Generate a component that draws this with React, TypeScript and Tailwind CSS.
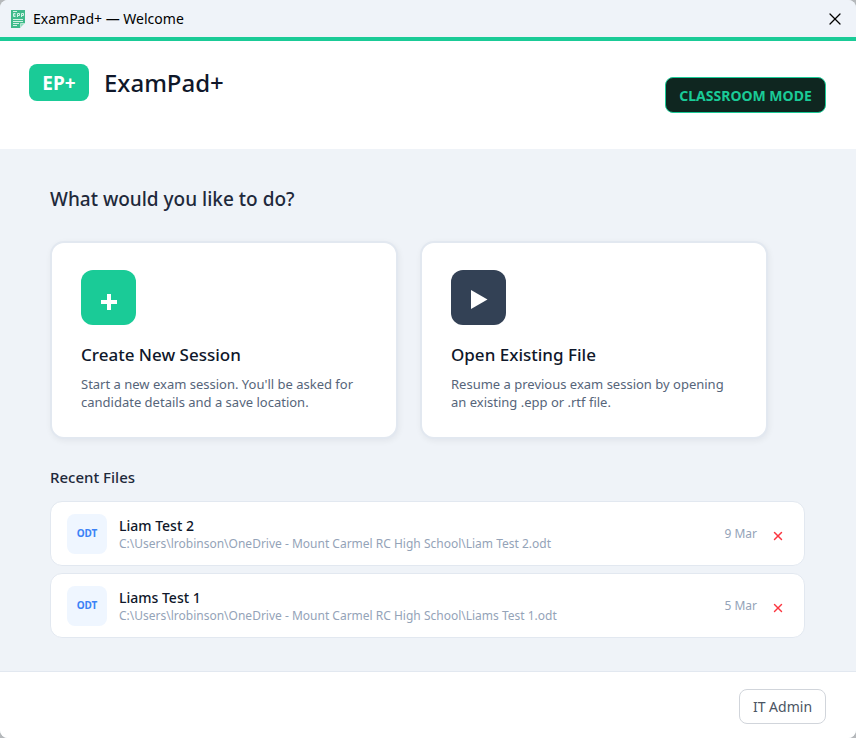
import { X } from "lucide-react";

type RecentFile = {
  name: string;
  path: string;
  date: string;
};

const recentFiles: RecentFile[] = [
  {
    name: "Liam Test 2",
    path: "C:\\Users\\lrobinson\\OneDrive - Mount Carmel RC High School\\Liam Test 2.odt",
    date: "9 Mar",
  },
  {
    name: "Liams Test 1",
    path: "C:\\Users\\lrobinson\\OneDrive - Mount Carmel RC High School\\Liams Test 1.odt",
    date: "5 Mar",
  },
];

const AppIcon = () => (
  <svg width="16" height="20" viewBox="0 0 16 20" aria-hidden="true">
    <path d="M1 1h14v13l-5 5H1z" fill="#3fba8b" />
    <path d="M10.5 18.500v-4h4z" fill="#8fdcbd" stroke="#e6f7f0" strokeWidth="0.6" />
    <path
      d="M3 2.500h4M3 10.500h10M3 12.500h10M3 14.500h6M3 16.500h4"
      stroke="#d3f1e5"
      strokeWidth="1"
    />
    <path
      d="M5.500 4.500h-2v3h2M3.500 6h2M7.500 8v-3.500h2v2h-2M11.500 8v-3.500h2v2h-2"
      stroke="#d3f1e5"
      strokeWidth="1"
      fill="none"
    />
  </svg>
);

const PlusIcon = () => (
  <svg width="55" height="55" viewBox="0 0 55 55" aria-hidden="true">
    <path d="M20 32h16M28 24v16" stroke="#fff" strokeWidth="4" />
  </svg>
);

const PlayIcon = () => (
  <svg width="55" height="55" viewBox="0 0 55 55" aria-hidden="true">
    <path d="M20 20v19l16.500-9.500z" fill="#fff" />
  </svg>
);

const TitleBar = () => (
  <div className="flex h-[41px] items-center justify-between border-b-4 border-[#1acb97] bg-[#eff3f9] pr-[11px] pl-[10px]">
    <div className="flex items-center gap-[7px]">
      <AppIcon />
      <span className="text-sm text-black">ExamPad+ — Welcome</span>
    </div>
    <button type="button" aria-label="Close" className="text-black">
      <X size={20} strokeWidth={1.5} />
    </button>
  </div>
);

const Header = () => (
  <header className="flex h-[108px] justify-between bg-white pr-[30px] pl-[29px]">
    <div className="mt-[23px] flex h-[37px] items-center gap-[15px]">
      <div className="flex h-[37px] w-[60px] items-center justify-center rounded-lg bg-[#1acb97] pt-[2px] text-[19px] font-bold text-white">
        EP+
      </div>
      <h1 className="text-2xl font-medium text-[#0f172a]">ExamPad+</h1>
    </div>
    <button
      type="button"
      className="mt-9 h-9 w-[161px] rounded-lg border border-[#1acb97] bg-[#0f2620] pt-[2px] text-sm font-bold text-[#1acb97]"
    >
      CLASSROOM MODE
    </button>
  </header>
);

type ActionCardProps = {
  title: string;
  lines: string[];
  iconClass: string;
  icon: React.ReactNode;
};

const ActionCard = ({ title, lines, iconClass, icon }: ActionCardProps) => (
  <button
    type="button"
    className="flex h-[198px] flex-col items-start rounded-[14px] border-2 border-[#e2e8f0] bg-white px-[29px] pt-[27px] text-left shadow-[1px_2px_6px_rgba(15,23,42,0.06)]"
  >
    <span className={`size-[55px] rounded-xl ${iconClass}`}>{icon}</span>
    <span className="mt-[18px] text-[17px] leading-6 font-medium text-[#0f172a]">
      {title}
    </span>
    <span className="mt-2 text-[13px] leading-[18px] text-[#56657a]">
      {lines.map((line) => (
        <span key={line} className="block whitespace-nowrap">
          {line}
        </span>
      ))}
    </span>
  </button>
);

const RecentRow = ({ file }: { file: RecentFile }) => (
  <li className="flex h-[65px] items-center rounded-xl border border-[#e2e8f0] bg-white pr-[19px] pl-4">
    <div className="flex size-10 items-center justify-center rounded-lg bg-[#eff6ff] text-[10px] font-bold text-[#3b82f6]">
      ODT
    </div>
    <div className="ml-3 min-w-0 flex-1 pt-[2px]">
      <p className="text-sm leading-[18px] font-medium text-[#0f172a]">
        {file.name}
      </p>
      <p className="truncate text-xs leading-[18px] text-[#94a3b8]">
        {file.path}
      </p>
    </div>
    <span className="text-xs text-[#94a3b8]">{file.date}</span>
    <button
      type="button"
      aria-label={`Remove ${file.name}`}
      className="ml-[14px] pt-1 text-[#fb3640]"
    >
      <X size={14} strokeWidth={2.5} />
    </button>
  </li>
);

const App = () => {
  return (
    <div className="min-h-screen bg-[#b5b8bb] font-['Noto_Sans','Open_Sans',sans-serif]">
      <div className="flex min-h-screen flex-col overflow-hidden rounded-lg bg-[#eff3f8]">
        <TitleBar />
        <Header />
        <main className="flex-1 pt-9 pr-[51px] pb-[33px] pl-[50px]">
          <h2 className="text-[19px] leading-7 font-medium text-[#1e293b]">
            What would you like to do?
          </h2>
          <div className="mt-7 grid grid-cols-2 gap-[22px] pr-[37px]">
            <ActionCard
              title="Create New Session"
              lines={[
                "Start a new exam session. You'll be asked for",
                "candidate details and a save location.",
              ]}
              iconClass="bg-[#1acb97]"
              icon={<PlusIcon />}
            />
            <ActionCard
              title="Open Existing File"
              lines={[
                "Resume a previous exam session by opening",
                "an existing .epp or .rtf file.",
              ]}
              iconClass="bg-[#334155]"
              icon={<PlayIcon />}
            />
          </div>
          <h3 className="mt-[26px] text-[15px] leading-6 font-medium text-[#1e293b]">
            Recent Files
          </h3>
          <ul className="mt-3 flex flex-col gap-[7px]">
            {recentFiles.map((file) => (
              <RecentRow key={file.name} file={file} />
            ))}
          </ul>
        </main>
        <footer className="flex justify-end border-t border-[#e2e8f0] bg-white pt-[17px] pr-[30px] pb-[14px]">
          <button
            type="button"
            className="h-[35px] w-[87px] rounded-lg border border-[#d1d5db] bg-white text-sm text-[#4b5563]"
          >
            IT Admin
          </button>
        </footer>
      </div>
    </div>
  );
};

export default App;
